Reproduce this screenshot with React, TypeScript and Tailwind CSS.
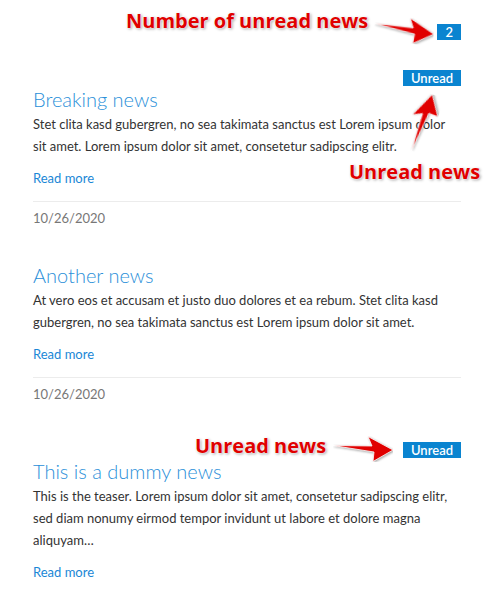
import type { ReactNode } from 'react'

type News = {
  title: string
  teaser: string
  date?: string
  unread?: boolean
}

const news: News[] = [
  {
    title: 'Breaking news',
    teaser:
      'Stet clita kasd gubergren, no sea takimata sanctus est Lorem ipsum dolor sit amet. Lorem ipsum dolor sit amet, consetetur sadipscing elitr.',
    date: '10/26/2020',
    unread: true,
  },
  {
    title: 'Another news',
    teaser:
      'At vero eos et accusam et justo duo dolores et ea rebum. Stet clita kasd gubergren, no sea takimata sanctus est Lorem ipsum dolor sit amet.',
    date: '10/26/2020',
  },
  {
    title: 'This is a dummy news',
    teaser:
      'This is the teaser. Lorem ipsum dolor sit amet, consetetur sadipscing elitr, sed diam nonumy eirmod tempor invidunt ut labore et dolore magna aliquyam…',
    unread: true,
  },
]

function Badge({ children }: { children: ReactNode }) {
  return (
    <span className="inline-flex h-4 items-center bg-[#0a84d0] px-[8px] text-[13px] font-semibold leading-none text-white">
      {children}
    </span>
  )
}

function NewsItem({ item }: { item: News }) {
  return (
    <article className="flex flex-col last:mt-[4px]">
      {item.unread && (
        <div className="flex justify-end">
          <Badge>Unread</Badge>
        </div>
      )}
      <h2 className="text-[20px] font-light leading-[27px] text-[#2a8fd9]">{item.title}</h2>
      <p className="text-[13px] leading-[22px] text-[#333]">{item.teaser}</p>
      <a href="#" className="mt-[10px] block text-[13px] leading-[22px] text-[#1a87d6]">
        Read more
      </a>
      {item.date && (
        <div className="mt-[12px] border-t border-[#ececec] pt-[5px] text-[13px] leading-[22px] text-[#777]">
          {item.date}
        </div>
      )}
    </article>
  )
}

// red arrow used by the annotations, drawn pointing right in a 60x26 box
function Arrow({ className }: { className?: string }) {
  return (
    <svg viewBox="0 0 60 26" className={className}>
      <path
        d="M0 9.5 L39 10 L35 0.5 L60 14 L40 25.5 L41 16 Z"
        fill="#e00000"
        stroke="#fff"
        strokeWidth="0.8"
        strokeLinejoin="round"
        style={{ filter: 'drop-shadow(1px 1px 1px rgba(0,0,0,0.35))' }}
      />
    </svg>
  )
}

function Note({ children, className }: { children: ReactNode; className?: string }) {
  return (
    <span
      className={`absolute whitespace-nowrap font-['Open_Sans',sans-serif] text-[20px] font-bold leading-none text-[#e00000] [text-shadow:0_0_2px_#fff,0_0_2px_#fff,1px_1px_3px_rgba(0,0,0,0.45)] ${className ?? ''}`}
    >
      {children}
    </span>
  )
}

export default function App() {
  return (
    <div className="relative h-[590px] w-[494px] overflow-hidden bg-white font-['Lato','Noto_Sans',sans-serif]">
      <div className="flex flex-col px-[33px] pt-[24px]">
        <div className="mb-[30px] flex justify-end">
          <Badge>2</Badge>
        </div>
        <div className="flex flex-col gap-[33px]">
          {news.map((item) => (
            <NewsItem key={item.title} item={item} />
          ))}
        </div>
      </div>

      {/* annotations */}
      <Note className="left-[126px] top-[11px]">Number of unread news</Note>
      <Arrow className="absolute left-[374px] top-[17px] h-[26px] w-[60px] rotate-[6deg]" />

      <Arrow className="absolute left-[393px] top-[110px] h-[26px] w-[60px] -rotate-[74deg]" />
      <Note className="left-[349px] top-[162px]">Unread news</Note>

      <Note className="left-[195px] top-[436px]">Unread news</Note>
      <Arrow className="absolute left-[333px] top-[436px] h-[26px] w-[60px]" />
    </div>
  )
}
